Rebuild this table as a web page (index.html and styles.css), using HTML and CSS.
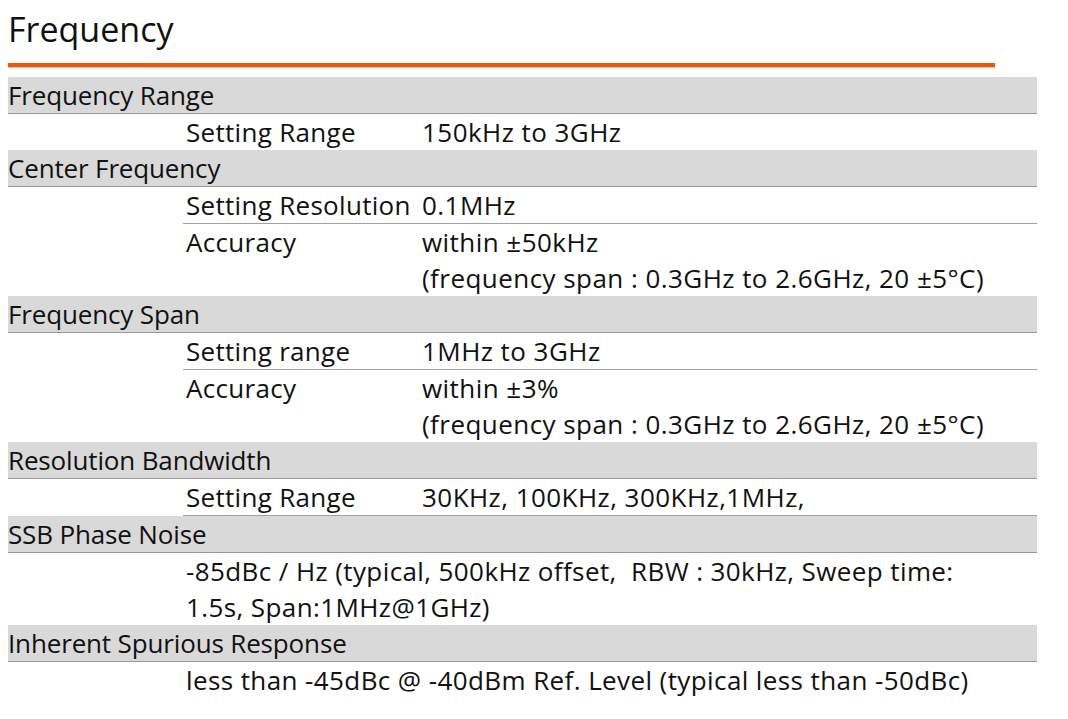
FILE: index.html
```html
<!DOCTYPE html>
<html>
<head>
<meta charset="utf-8">
<link rel="stylesheet" href="styles.css">
</head>
<body>
<div class="page">
  <h1 class="title">Frequency</h1>
  <div class="rule"></div>
  <div class="spec">
    <div class="head">Frequency Range</div>
    <div class="sub"><span class="label">Setting Range</span><span class="value">150kHz to 3GHz</span></div>

    <div class="head">Center Frequency</div>
    <div class="sub lined"><span class="label">Setting Resolution</span><span class="value">0.1MHz</span></div>
    <div class="sub"><span class="label">Accuracy</span><span class="value">within ±50kHz<br>(frequency span : 0.3GHz to 2.6GHz, 20 ±5°C)</span></div>

    <div class="head">Frequency Span</div>
    <div class="sub lined"><span class="label">Setting range</span><span class="value">1MHz to 3GHz</span></div>
    <div class="sub"><span class="label">Accuracy</span><span class="value">within ±3%<br>(frequency span : 0.3GHz to 2.6GHz, 20 ±5°C)</span></div>

    <div class="head">Resolution Bandwidth</div>
    <div class="sub lined"><span class="label">Setting Range</span><span class="value">30KHz, 100KHz, 300KHz,1MHz,</span></div>

    <div class="head">SSB Phase Noise</div>
    <div class="sub"><span class="full">-85dBc / Hz (typical, 500kHz offset,&nbsp; RBW : 30kHz, Sweep time:<br>1.5s, Span:1MHz@1GHz)</span></div>

    <div class="head">Inherent Spurious Response</div>
    <div class="sub"><span class="full">less than -45dBc @ -40dBm Ref. Level (typical less than -50dBc)</span></div>
  </div>
</div>
</body>
</html>
```

FILE: styles.css
```css
html, body {
  margin: 0;
  padding: 0;
  background: #ffffff;
}

.page {
  padding: 0 8px;
  font-family: "Open Sans", "Liberation Sans", sans-serif;
  color: #111111;
}

.title {
  margin: 0;
  padding-top: 6px;
  height: 57px;
  font-size: 34px;
  font-weight: normal;
  line-height: 46px;
  color: #111111;
}

.rule {
  width: 987px;
  height: 4px;
  background: #e9560c;
  box-shadow: 0 1px 1px #f7b891;
}

.spec {
  width: 1029px;
  margin-top: 10px;
  font-size: 26px;
  line-height: 36px;
}

.head {
  background: #d9d9d9;
  border-bottom: 1px solid #999999;
  height: 36px;
  letter-spacing: -0.15px;
}

.sub {
  margin-left: 175px;
  padding-left: 3px;
  display: grid;
  grid-template-columns: 236px 1fr;
}

.sub.lined {
  border-bottom: 1px solid #a0a0a0;
}

.label {
  white-space: nowrap;
  letter-spacing: 0.3px;
}

.value {
  letter-spacing: 0.45px;
}

.full {
  grid-column: 1 / 3;
  letter-spacing: 0.4px;
}
```
